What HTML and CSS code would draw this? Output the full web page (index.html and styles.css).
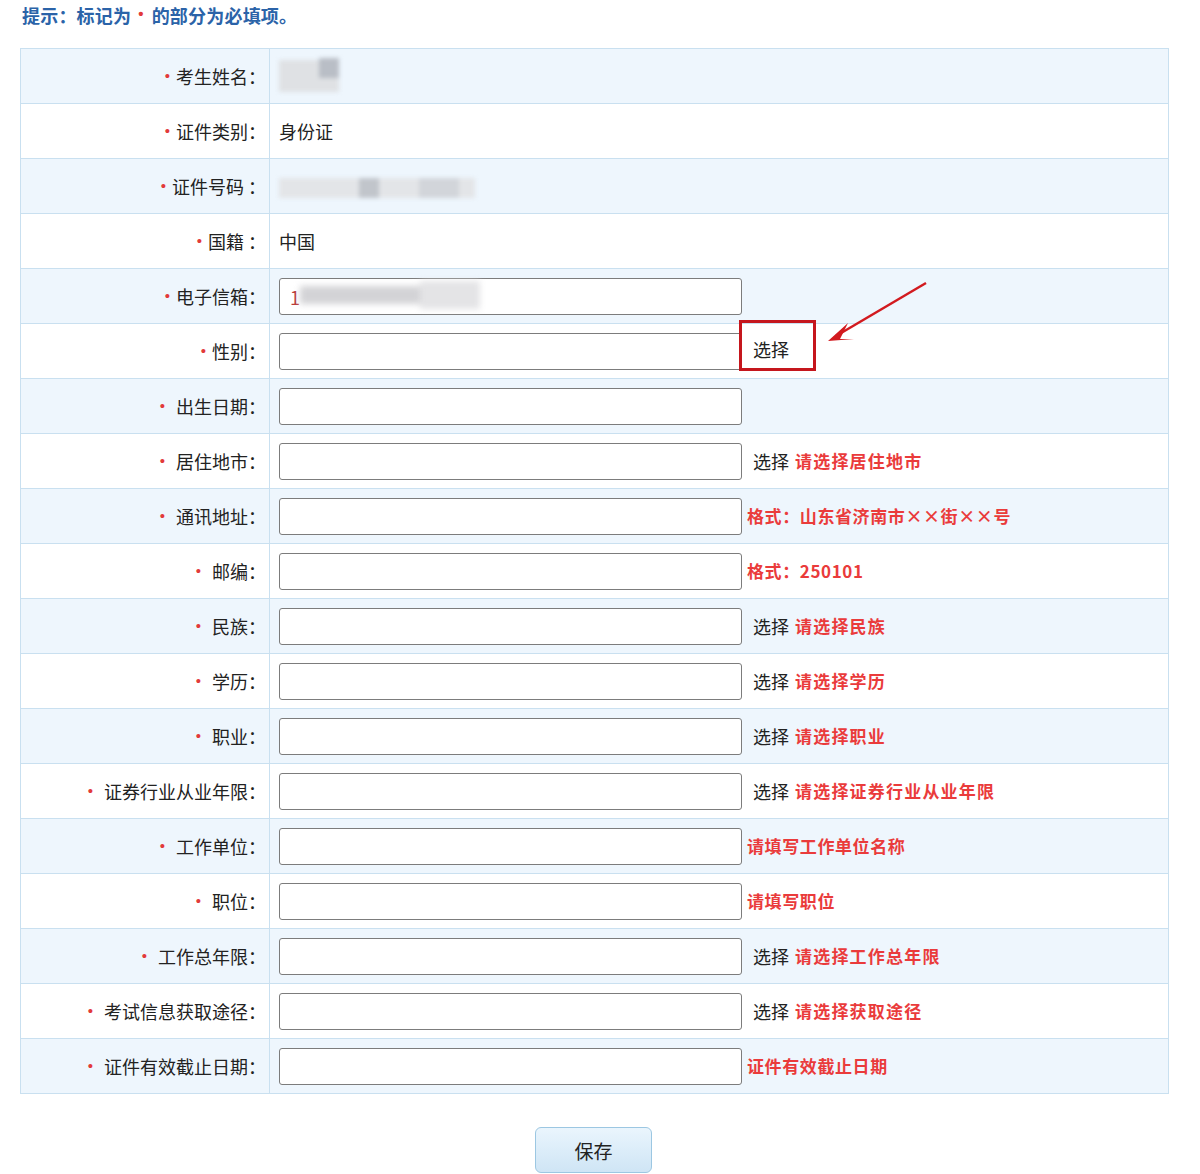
FILE: index.html
```html
<!DOCTYPE html>
<html lang="zh-CN">
<head>
<meta charset="utf-8">
<title>报名信息</title>
<link rel="stylesheet" href="styles.css">
</head>
<body>
<div class="page">
  <div class="tip"><span class="tip-inner">提示：标记为<span class="tip-dot">•</span>的部分为必填项。</span></div>
  <table class="form">
    <tr class="alt">
      <td class="lbl"><span class="req">•</span>考生姓名：</td>
      <td class="val"><span class="blur-name"><i></i><i></i></span></td>
    </tr>
    <tr>
      <td class="lbl"><span class="req">•</span>证件类别：</td>
      <td class="val">身份证</td>
    </tr>
    <tr class="alt">
      <td class="lbl"><span class="req">•</span>证件号码 ：</td>
      <td class="val"><span class="blur-id"><i></i><i></i><i></i></span></td>
    </tr>
    <tr>
      <td class="lbl"><span class="req">•</span>国籍 ：</td>
      <td class="val">中国</td>
    </tr>
    <tr class="alt">
      <td class="lbl"><span class="req">•</span>电子信箱：</td>
      <td class="val"><span class="inp"><span class="email-one">1</span><span class="blur-mail"><i></i><i></i></span></span></td>
    </tr>
    <tr>
      <td class="lbl"><span class="req">•</span>性别：</td>
      <td class="val"><span class="inp"></span><span class="pick boxed">选择</span>
        <svg class="arrow" width="110" height="70" viewBox="0 0 110 70"><line x1="104" y1="4" x2="14" y2="57" stroke="#d21a1f" stroke-width="2.5"/><polygon points="6,62 26,44 18,60 32,60" fill="#d21a1f"/></svg>
      </td>
    </tr>
    <tr class="alt">
      <td class="lbl"><span class="req sp">•</span>出生日期：</td>
      <td class="val"><span class="inp"></span></td>
    </tr>
    <tr>
      <td class="lbl"><span class="req sp">•</span>居住地市：</td>
      <td class="val"><span class="inp"></span><span class="pick">选择</span><span class="hint">请选择居住地市</span></td>
    </tr>
    <tr class="alt">
      <td class="lbl"><span class="req sp">•</span>通讯地址：</td>
      <td class="val"><span class="inp"></span><span class="hint near">格式：山东省济南市××街××号</span></td>
    </tr>
    <tr>
      <td class="lbl"><span class="req sp">•</span>邮编：</td>
      <td class="val"><span class="inp"></span><span class="hint near">格式：250101</span></td>
    </tr>
    <tr class="alt">
      <td class="lbl"><span class="req sp">•</span>民族：</td>
      <td class="val"><span class="inp"></span><span class="pick">选择</span><span class="hint">请选择民族</span></td>
    </tr>
    <tr>
      <td class="lbl"><span class="req sp">•</span>学历：</td>
      <td class="val"><span class="inp"></span><span class="pick">选择</span><span class="hint">请选择学历</span></td>
    </tr>
    <tr class="alt">
      <td class="lbl"><span class="req sp">•</span>职业：</td>
      <td class="val"><span class="inp"></span><span class="pick">选择</span><span class="hint">请选择职业</span></td>
    </tr>
    <tr>
      <td class="lbl"><span class="req sp">•</span>证券行业从业年限：</td>
      <td class="val"><span class="inp"></span><span class="pick">选择</span><span class="hint">请选择证券行业从业年限</span></td>
    </tr>
    <tr class="alt">
      <td class="lbl"><span class="req sp">•</span>工作单位：</td>
      <td class="val"><span class="inp"></span><span class="hint near">请填写工作单位名称</span></td>
    </tr>
    <tr>
      <td class="lbl"><span class="req sp">•</span>职位：</td>
      <td class="val"><span class="inp"></span><span class="hint near">请填写职位</span></td>
    </tr>
    <tr class="alt">
      <td class="lbl"><span class="req sp">•</span>工作总年限：</td>
      <td class="val"><span class="inp"></span><span class="pick">选择</span><span class="hint">请选择工作总年限</span></td>
    </tr>
    <tr>
      <td class="lbl"><span class="req sp">•</span>考试信息获取途径：</td>
      <td class="val"><span class="inp"></span><span class="pick">选择</span><span class="hint">请选择获取途径</span></td>
    </tr>
    <tr class="alt">
      <td class="lbl"><span class="req sp">•</span>证件有效截止日期：</td>
      <td class="val"><span class="inp"></span><span class="hint near">证件有效截止日期</span></td>
    </tr>
  </table>
  <div class="actions"><button class="save" type="button">保存</button></div>
</div>
</body>
</html>
```

FILE: styles.css
```css
html, body {
  margin: 0;
  padding: 0;
  background: #ffffff;
}
body {
  font-family: "Noto Sans CJK SC", "Noto Sans", "Liberation Sans", sans-serif;
  color: #222;
  width: 1200px;
  height: 1174px;
  overflow: hidden;
}
.page {
  padding: 0 0 0 20px;
}
.tip {
  height: 48px;
  padding-left: 2px;
}
.tip-inner {
  display: inline-block;
  margin-top: 1px;
  font-size: 18px;
  font-weight: bold;
  color: #2b63a8;
  line-height: 26px;
  letter-spacing: 0.2px;
}
.tip-dot {
  color: #e23a3a;
  font-family: "Liberation Sans", sans-serif;
  font-size: 15px;
  vertical-align: 4px;
  margin: 0 8px 0 7px;
}
.form {
  border-collapse: collapse;
  width: 1149px;
  table-layout: fixed;
}
.form td {
  border: 1px solid #c9e0f0;
  height: 55px;
  padding: 0;
  font-size: 18px;
  line-height: 22px;
  box-sizing: border-box;
}
.form tr.alt td {
  background: #eef6fd;
}
.form tr td {
  background: #ffffff;
}
.lbl {
  width: 249px;
  text-align: right;
  padding-right: 3px !important;
  color: #222;
  white-space: nowrap;
}
.req {
  color: #e23a3a;
  font-family: "Liberation Sans", sans-serif;
  font-size: 15px;
  vertical-align: 3px;
  margin-right: 6px;
}
.req.sp {
  margin-right: 11px;
}
.val {
  padding-left: 9px !important;
  position: relative;
  white-space: nowrap;
  color: #222;
}
.inp {
  display: inline-block;
  vertical-align: middle;
  width: 463px;
  height: 37px;
  box-sizing: border-box;
  border: 1px solid #7c7c7c;
  border-radius: 3px;
  background: #fff;
  position: relative;
}
.pick {
  display: inline-block;
  vertical-align: middle;
  margin-left: 11px;
  color: #222;
}
.pick.boxed {
  margin-left: -3px;
  width: 77px;
  height: 51px;
  box-sizing: border-box;
  border: 3px solid #c5161d;
  padding: 15px 0 0 11px;
  line-height: 22px;
  position: relative;
  top: -6px;
}
.hint {
  display: inline-block;
  vertical-align: middle;
  margin-left: 6px;
  color: #ea3b3b;
  font-weight: bold;
  font-size: 17px;
  letter-spacing: 1.2px;
}
.hint.near {
  margin-left: 5px;
  letter-spacing: 0.6px;
}
.arrow {
  position: absolute;
  left: 552px;
  top: -45px;
}
.email-one {
  position: absolute;
  left: 10px;
  top: 7px;
  color: #b83a3a;
}
.blur-mail {
  position: absolute;
  left: 20px;
  top: 2px;
  width: 180px;
  height: 30px;
  filter: blur(3px);
}
.blur-mail i {
  position: absolute;
  display: block;
  background: #d3d3d6;
}
.blur-mail i:nth-child(1) { left: 0; top: 5px; width: 130px; height: 18px; }
.blur-mail i:nth-child(2) { left: 120px; top: 0; width: 60px; height: 28px; background: #e4e4e6; }
.blur-name {
  display: inline-block;
  vertical-align: middle;
  width: 60px;
  height: 36px;
  position: relative;
  filter: blur(2px);
}
.blur-name i {
  position: absolute;
  display: block;
}
.blur-name i:nth-child(1) { left: 0; top: 2px; width: 60px; height: 32px; background: #dfe1e4; }
.blur-name i:nth-child(2) { left: 40px; top: 0; width: 20px; height: 20px; background: #b9bec6; }
.blur-id {
  display: inline-block;
  vertical-align: middle;
  width: 196px;
  height: 20px;
  position: relative;
  filter: blur(2px);
}
.blur-id i {
  position: absolute;
  display: block;
  top: 0;
  height: 20px;
}
.blur-id i:nth-child(1) { left: 0; width: 196px; background: #e3e5e8; }
.blur-id i:nth-child(2) { left: 80px; width: 20px; background: #c1c5cb; }
.blur-id i:nth-child(3) { left: 140px; width: 40px; background: #d2d5da; }
.actions {
  width: 1149px;
  text-align: center;
  padding-top: 33px;
}
.save {
  margin-left: -2px;
  width: 117px;
  height: 46px;
  border: 1px solid #9cc7e2;
  border-radius: 6px;
  background: linear-gradient(#eaf5fd 0%, #dcedf9 50%, #cfe5f5 100%);
  font-family: "Noto Sans CJK SC", sans-serif;
  font-size: 19px;
  color: #222;
  padding: 0;
}
```
